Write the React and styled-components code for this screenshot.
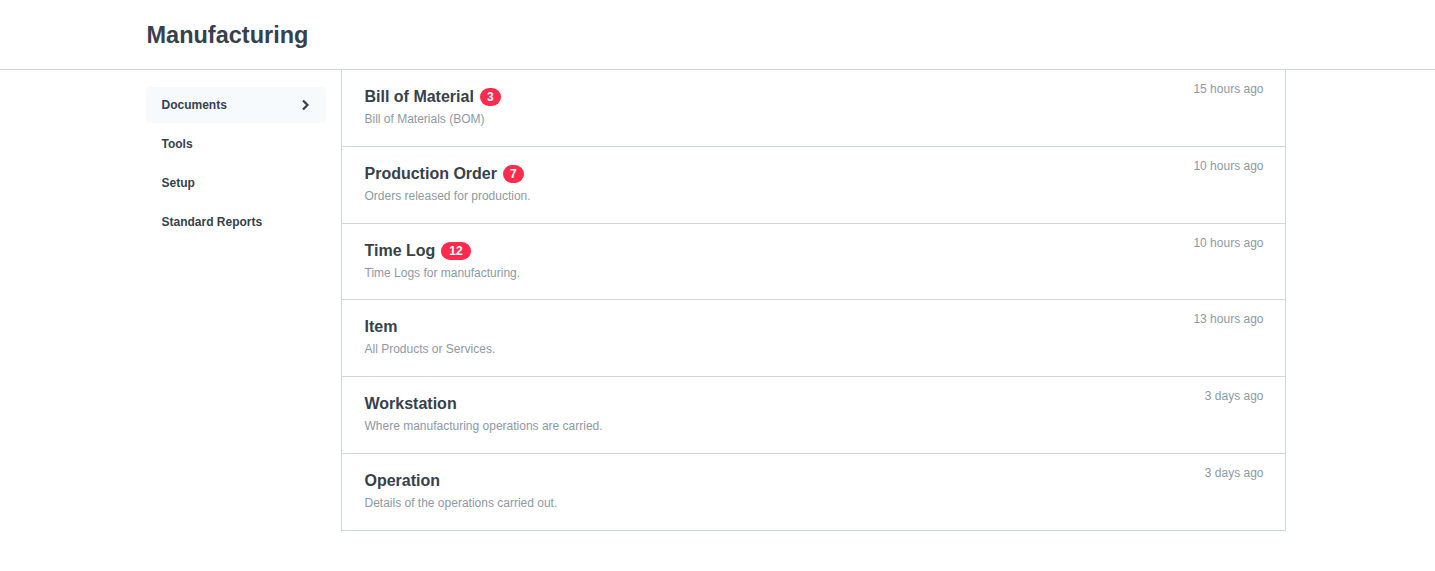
import React from "react";
import styled, { createGlobalStyle } from "styled-components";

const Global = createGlobalStyle`
  html, body { margin: 0; padding: 0; background: #fff; }
  body { font-family: "Liberation Sans", Arial, Helvetica, sans-serif; color: #36414c; -webkit-font-smoothing: antialiased; }
`;

const Header = styled.header`
  height: 69px;
  border-bottom: 1px solid #d1d8dd;
`;

const Container = styled.div`
  width: 1140px;
  margin: 0 auto;
  box-sizing: border-box;
  position: relative;
  left: -2px;
`;

const Title = styled.h1`
  margin: 0;
  padding-top: 20px;
  padding-left: 1px;
  font-size: 23.5px;
  line-height: 30px;
  font-weight: 700;
  color: #36414c;
`;

const Body = styled.div`
  display: grid;
  grid-template-columns: 180px 945px;
  column-gap: 15px;
`;

const Sidebar = styled.nav`
  padding-top: 17px;
  display: flex;
  flex-direction: column;
  gap: 3px;
`;

const NavItem = styled.div`
  height: 36px;
  display: flex;
  align-items: center;
  justify-content: space-between;
  padding: 0 15px 0 16px;
  border-radius: 4px;
  font-size: 12px;
  font-weight: 700;
  color: #36414c;
  background: ${(p) => (p.$active ? "#f7fafc" : "transparent")};
`;

const List = styled.div`
  border-left: 1px solid #d1d8dd;
  border-right: 1px solid #d1d8dd;
`;

const Row = styled.div`
  display: flex;
  justify-content: space-between;
  align-items: flex-start;
  padding: 16px 21px 17.8px 23px;
  border-bottom: 1px solid #d1d8dd;
`;

const RowMain = styled.div`
  display: flex;
  flex-direction: column;
`;

const RowTitle = styled.div`
  display: flex;
  align-items: center;
  gap: 6px;
  font-size: 16px;
  line-height: 22px;
  font-weight: 700;
  color: #36414c;
`;

const Badge = styled.span`
  display: inline-flex;
  align-items: center;
  justify-content: center;
  min-width: 21px;
  height: 18px;
  padding: 0 ${(p) => (p.$wide ? "8px" : "2px")};
  box-sizing: border-box;
  border-radius: 9px;
  background: #ff2b4e;
  color: #fff;
  font-size: 12px;
  font-weight: 700;
  line-height: 1;
`;

const RowSub = styled.div`
  margin-top: 2px;
  font-size: 12px;
  line-height: 18px;
  color: #8d99a6;
`;

const Time = styled.div`
  margin-top: -6px;
  font-size: 12px;
  line-height: 18px;
  color: #8d99a6;
`;

const Chevron = () => (
  <svg width="9" height="12" viewBox="0 0 9 12" style={{ marginRight: 1 }}>
    <path d="M2 1.5 L6.5 6 L2 10.5" fill="none" stroke="#36414c" strokeWidth="2.2" />
  </svg>
);

const nav = ["Documents", "Tools", "Setup", "Standard Reports"];

const rows = [
  { title: "Bill of Material", badge: "3", sub: "Bill of Materials (BOM)", time: "15 hours ago" },
  { title: "Production Order", badge: "7", sub: "Orders released for production.", time: "10 hours ago" },
  { title: "Time Log", badge: "12", sub: "Time Logs for manufacturing.", time: "10 hours ago" },
  { title: "Item", sub: "All Products or Services.", time: "13 hours ago" },
  { title: "Workstation", sub: "Where manufacturing operations are carried.", time: "3 days ago" },
  { title: "Operation", sub: "Details of the operations carried out.", time: "3 days ago" },
];

export default function App() {
  return (
    <>
      <Global />
      <Header>
        <Container>
          <Title>Manufacturing</Title>
        </Container>
      </Header>
      <Container>
        <Body>
          <Sidebar>
            {nav.map((n, i) => (
              <NavItem key={n} $active={i === 0}>
                {n}
                {i === 0 && <Chevron />}
              </NavItem>
            ))}
          </Sidebar>
          <List>
            {rows.map((r) => (
              <Row key={r.title}>
                <RowMain>
                  <RowTitle>
                    {r.title}
                    {r.badge && <Badge $wide={r.badge.length > 1}>{r.badge}</Badge>}
                  </RowTitle>
                  <RowSub>{r.sub}</RowSub>
                </RowMain>
                <Time>{r.time}</Time>
              </Row>
            ))}
          </List>
        </Body>
      </Container>
    </>
  );
}
